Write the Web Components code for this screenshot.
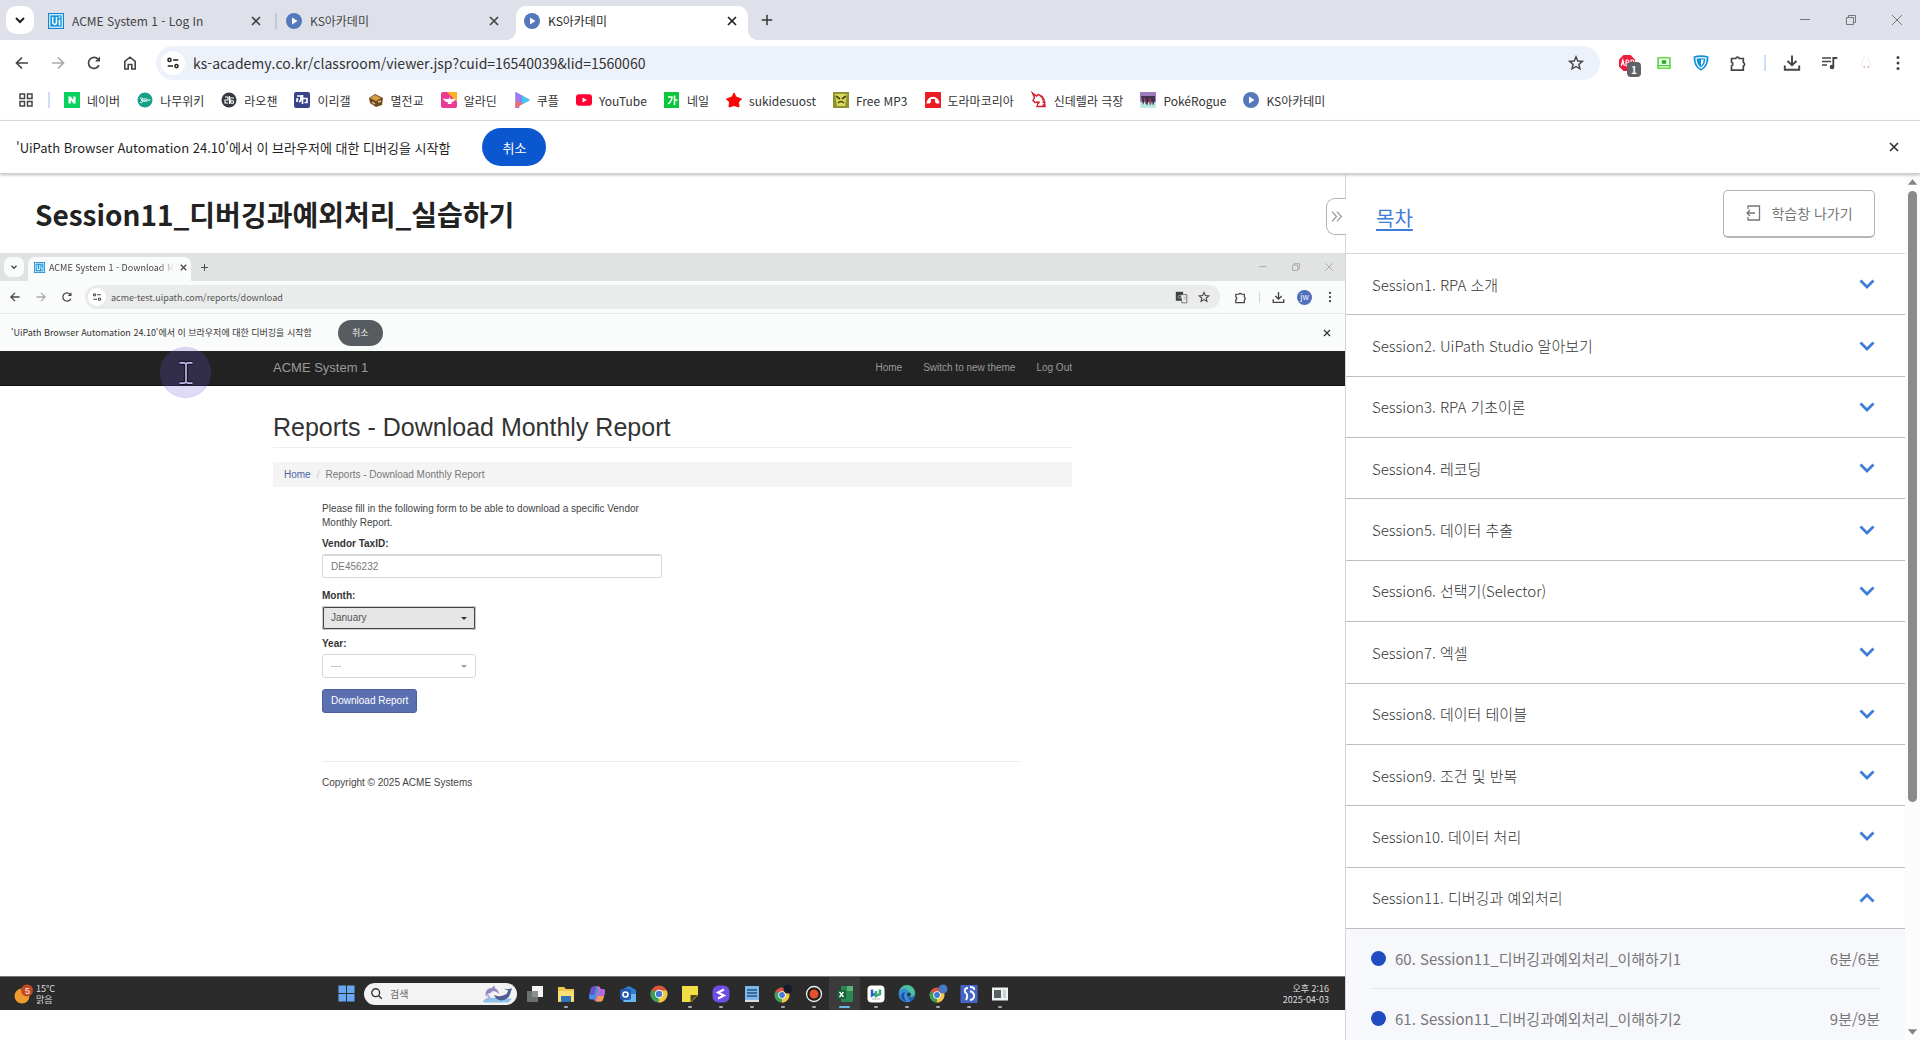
<!DOCTYPE html>
<html lang="ko">
<head>
<meta charset="utf-8">
<title>KS아카데미</title>
<style>
  html, body { margin: 0; height: 100%; }
  body { font-family: "Noto Sans CJK KR", sans-serif; font-size: 12px; color: #1f1f1f; background: #fff; overflow: hidden; }
</style>
</head>
<body>
<app-window></app-window>
<script>
const ICONS = {
  down: ['0 0 16 16', '<path d="M4 6l4 4 4-4" fill="none" stroke="currentColor" stroke-width="2"/>'],
  close: ['0 0 16 16', '<path d="M4 4l8 8M12 4l-8 8" fill="none" stroke="currentColor" stroke-width="1.7"/>'],
  thinclose: ['0 0 16 16', '<path d="M3 3l10 10M13 3L3 13" fill="none" stroke="currentColor" stroke-width="1"/>'],
  min: ['0 0 16 16', '<path d="M3 7.5h10" stroke="currentColor"/>'],
  restore: ['0 0 16 16', '<path d="M3.500 5.500h7v7h-7zM5.500 5.500v-2h7v7h-2" fill="none" stroke="currentColor"/>'],
  plus: ['0 0 16 16', '<path d="M8 2v12M2 8h12" stroke="currentColor" stroke-width="1.700"/>'],
  back: ['0 0 16 16', '<path d="M14 8H3M8 2.500L2.500 8 8 13.500" fill="none" stroke="currentColor" stroke-width="1.700"/>'],
  fwd: ['0 0 16 16', '<path d="M2 8h11M8 2.500L13.500 8 8 13.500" fill="none" stroke="currentColor" stroke-width="1.700"/>'],
  reload: ['0 0 16 16', '<path d="M13 10.200A5.500 5.500 0 1 1 12 4.200" fill="none" stroke="currentColor" stroke-width="1.700"/><path d="M14 1.500v5H9z" fill="currentColor"/>'],
  home: ['0 0 16 16', '<path d="M2.800 14V6.300L8 2.200l5.200 4.100V14H9.800V9.500H6.200V14z" fill="none" stroke="currentColor" stroke-width="1.600"/>'],
  site: ['0 0 16 16', '<g fill="none" stroke="currentColor" stroke-width="1.700"><circle cx="4" cy="4.500" r="1.800"/><path d="M8 4.500h6M2 11.500h6"/><circle cx="12" cy="11.500" r="1.800"/></g>'],
  star: ['0 0 16 16', '<path d="M8 1.800l1.800 4.200 4.600.4-3.500 3 1.100 4.500L8 11.500l-4 2.400 1.100-4.500-3.500-3 4.600-.4z" fill="none" stroke="currentColor" stroke-width="1.400"/>'],
  puzzle: ['0 0 18 18', '<path d="M2.500 4.500h4.200a1.900 1.900 0 0 1 3.600 0h4v4a1.900 1.900 0 0 1 0 3.600v4h-11.800v-4a2.200 2.200 0 0 0 0-4z" fill="none" stroke="currentColor" stroke-width="1.700"/>'],
  download: ['0 0 18 18', '<path d="M9 1.500v9.500M4.500 7L9 11.300 13.500 7M1.800 11.500v4.300h14.400v-4.300" fill="none" stroke="currentColor" stroke-width="1.900"/>'],
  media: ['0 0 18 18', '<path d="M2 4h9M2 7.500h9M2 11h5" stroke="currentColor" stroke-width="1.600"/><path d="M13.300 13V4h4" fill="none" stroke="currentColor" stroke-width="1.800"/><circle cx="12" cy="13" r="2.300" fill="currentColor"/>'],
  dots: ['0 0 16 16', '<g fill="currentColor"><circle cx="8" cy="2.500" r="1.500"/><circle cx="8" cy="8" r="1.500"/><circle cx="8" cy="13.500" r="1.500"/></g>'],
  apps: ['0 0 16 16', '<path d="M2 2h4.500v4.500H2zM9.500 2H14v4.500H9.500zM2 9.500h4.500V14H2zM9.500 9.500H14V14H9.500z" fill="none" stroke="currentColor" stroke-width="1.500"/>'],
  chevron: ['0 0 16 16', '<path d="M1.500 4.500L8 11l6.500-6.500" fill="none" stroke="currentColor" stroke-width="2.800"/>'],
  double: ['0 0 16 16', '<path d="M2.500 2L8 8l-5.500 6M8.500 2L14 8l-5.500 6" fill="none" stroke="currentColor" stroke-width="1.600"/>'],
  exit: ['0 0 16 16', '<path d="M3 4V1h11.500v14H3v-3M10 8H1.500M5 5L2 8l3 3" fill="none" stroke="currentColor" stroke-width="1.300"/>'],
  tri: ['0 0 16 16', '<path d="M8 4.500l5 6H3z" fill="currentColor"/>'],
  uipath: ['0 0 16 16', '<path d="M0 0h16v16H0z" fill="#1484d6"/><path d="M1.200 1.200h13.600v13.600H1.200z" fill="#fff"/><path d="M2.300 2.300h11.400v11.400H2.300z" fill="#1496dc"/><path d="M4.700 4v5.500a1.900 1.900 0 0 0 3.800 0V4M11.500 6.500V12.500M11.500 3.500v1.500" fill="none" stroke="#fff" stroke-width="1.500"/>'],
  play: ['0 0 16 16', '<circle cx="8" cy="8" r="8" fill="#5578bd"/><path d="M6 4.500L11.500 8 6 11.500z" fill="#fff"/>'],
  abp: ['0 0 18 18', '<path d="M5.500 1h7L17 5.500v7L12.500 17h-7L1 12.500v-7z" fill="#ed1c3c"/><path d="M3.200 12l1.600-6 1.600 6M3.800 10h2M8 6v6M8 6h1.500a1.300 1.300 0 0 1 0 2.800H8h1.500a1.500 1.500 0 0 1 0 3.200H8M13 12V6h1.300a1.500 1.500 0 0 1 0 3.200H13" fill="none" stroke="#fff" stroke-width="1.100"/>'],
  green: ['0 0 16 16', '<path d="M2.700 3.500h10.600v9H2.700zM2.700 10.300h10.600" fill="none" stroke="#3ad41f" stroke-width="1.200"/><path d="M6 5.500h4v3.200H6z" fill="#25b01a"/>'],
  shield: ['0 0 18 18', '<path d="M1.500 2.500Q9 .2 16.500 2.500q.4 10.500-7.500 14.300Q1.100 13 1.500 2.500z" fill="#1290d8"/><path d="M4 4.200Q9 3 14 4.200q0 6.800-5 10-5-3.200-5-10z" fill="none" stroke="#fff" stroke-width="1.200"/><path d="M9 5.500h2.700q0 4.200-2.700 6.700z" fill="#fff"/>'],
  ghost: ['0 0 16 16', '<path d="M7 2q-3 4-2.500 9M9 3q4 4 2 9" fill="none" stroke="#eee" stroke-width="1"/><circle cx="6.500" cy="11.500" r=".8" fill="#e7a0a0"/><circle cx="10" cy="11.500" r=".8" fill="#e7a0a0"/>'],
  naver: ['0 0 16 16', '<path d="M0 0h16v16H0z" fill="#09d25f"/><path d="M4.500 4.500h2.300L9.300 8V4.500h2.300v7H9.300L6.800 8v3.500H4.500z" fill="#fff"/>'],
  namu: ['0 0 16 16', '<circle cx="8" cy="8" r="7.500" fill="#16a085"/><path d="M3 6.500q2-1.500 2.500 0T4 8q3 0 1.500 2t-2.500 0M7 6v4l2-2 1 2M10 8h3.500M9 6v2" fill="none" stroke="#fff"/>'],
  rao: ['0 0 16 16', '<circle cx="8" cy="8" r="7.500" fill="#343842"/><path d="M4 5h3v3H4v3h3M8.500 4v8M9 6h4M11 8.500a1.500 1.500 0 1 0 .1 0M8 8h2" fill="none" stroke="#fff" stroke-width="1.100"/>'],
  dc: ['0 0 16 16', '<rect width="16" height="16" rx="2" fill="#37428b"/><path d="M3 4h4q.5 5-2 6M4.500 7h-1.500v3M8.500 3v9M8.500 6.500h4.500v4h-2.500" fill="none" stroke="#fff" stroke-width="1.700"/>'],
  box: ['0 0 16 16', '<path d="M1 6l6-4 8 4-1 7-6 2-6-4z" fill="#6b4a23"/><path d="M2 6l5-3 6 3-5 3z" fill="#d8a043"/><path d="M4 10l3 2M10 10l3-1" stroke="#f0c66a" stroke-width="1.500"/>'],
  aladin: ['0 0 16 16', '<rect width="16" height="16" rx="2" fill="#ea3a94"/><path d="M6 0h10v10z" fill="#ffaf20"/><path d="M2 6.500q4 .5 5.500.8L8.500 5l1 2.300 5-.8q-1 3.500-4.500 4l1 1.500H6.500l1-1.500Q3 9.500 2 6.500z" fill="#fff"/>'],
  coupang: ['0 0 16 16', '<path d="M1.500 0L16 8 1.500 16z" fill="#4e93f5"/><path d="M1.500 0L9 4 5 16H1.500z" fill="#a07bea"/><path d="M1.500 10L10 11 1.500 16z" fill="#ff6c5c"/><path d="M8 3.600L16 8l-8 4z" fill="#42c5f7"/>'],
  youtube: ['0 0 16 16', '<rect y="2.300" width="16" height="11.400" rx="3" fill="#f03"/><path d="M6.500 5.500L11 8l-4.500 2.500z" fill="#fff"/>'],
  neil: ['0 0 16 16', '<rect width="15" height="16" fill="#0bc73b"/><path d="M4 5h4q0 4-4 7M10.500 3.500V13M10.500 8h3" fill="none" stroke="#fff" stroke-width="1.500"/>'],
  redstar: ['0 0 16 16', '<path d="M8 1l2 4 5.500 2-3 3 .5 5-5-1.500L3 15l.5-5-3-3L6 5z" fill="#f80606" stroke="#f80606"/>'],
  mp3: ['0 0 16 16', '<rect width="16" height="16" fill="#8f9230"/><path d="M2 2h12L12 14H4z" fill="#dbd957"/><path d="M3 4l4 3M13 4L9 7M5 11q3-3 6 0" stroke="#454018" stroke-width="1.600" fill="none"/>'],
  drama: ['0 0 16 16', '<rect width="16" height="16" rx="1" fill="#ed1c24"/><path d="M1.500 11.500a6.500 6.800 0 0 1 13 0h-3l-1.500-1.500V7H6v3l-1.500 1.500z" fill="#fff"/><path d="M6.500 7h3v3l-1.500 2-1.500-2z" fill="#ed1c24"/>'],
  unicorn: ['0 0 16 16', '<path d="M1.500 1l4 3 2-1.500L9 3.500q5 2 5 11H6q0-3 2.500-4.500L4 10.500 2 8.500l1.500-3z" fill="#fff" stroke="#d3202e" stroke-width="1.500"/><path d="M10 4q3 3 2.500 10" fill="none" stroke="#d3202e" stroke-width="2" stroke-dasharray="2 1"/>'],
  poke: ['0 0 16 16', '<rect width="16" height="16" fill="#9d7bbd"/><path d="M0 10h16v6H0z" fill="#bdebe6"/><path d="M1 4h14v4l-2 6-1-5-2 5-1-6-2 6-2-6-2 5z" fill="#41304f"/><path d="M4 6l2 6M10 6l1 6" stroke="#d0424c"/>'],
  translate: ['0 0 16 16', '<rect x="1" y="1" width="9" height="11" fill="#3d4143"/><path d="M7 4.500h7.500v10H8.500z" fill="#fafafa" stroke="#555"/><path d="M7.500 5.500H5.200a1.800 1.800 0 1 0 1.900 1.800H6M10 7.500h3.500M12.500 7.500q-.5 3-2.500 4.500M10.500 9l3 3" fill="none" stroke="#aaa"/>'],
  weather: ['0 0 20 20', '<circle cx="8" cy="12" r="7.500" fill="#ee9b31"/><circle cx="13" cy="6.500" r="6" fill="#c24a23"/><text x="11" y="10" font-size="9" fill="#fff" font-family="Liberation Sans">5</text>'],
  win: ['0 0 18 18', '<path d="M.5.500h8v8h-8zM9.500.500h8v8h-8zM.5 9.500h8v8h-8zM9.500 9.500h8v8h-8z" fill="#69a9f4"/>'],
  search: ['0 0 16 16', '<circle cx="7" cy="7" r="4.800" fill="none" stroke="#333" stroke-width="1.700"/><path d="M10.500 10.500l4 4" stroke="#333" stroke-width="1.700"/>'],
  whale: ['0 0 34 18', '<path d="M1 17q3-5 9-4l22 1-4 4H2z" fill="#8fc3ea"/><path d="M3.500 10q0-7 7-7.500l2.500-2.500.8 3q4 2 4.200 6-3-3.500-7-3-2 2.500-4 2.500z" fill="#9585c4"/><path d="M13 10q7 3 13-1l2-3.500-4.500-2 4.500.5 4-1-1.500 4q-1.500 8-9.500 9-7-1-8-6z" fill="#4e5d92"/><path d="M4 11q3-3 4 4" fill="none" stroke="#b5a9df" stroke-width="2"/>'],
  task: ['0 0 18 18', '<path d="M6 1h11v11H6z" fill="#f3f3f3"/><path d="M1 6h11v11H1z" fill="#777c7e" opacity=".85"/>'],
  folder: ['0 0 18 18', '<path d="M1 2h6l2 2h8v13H1z" fill="#ecc94c"/><path d="M1 6h16v10H1z" fill="#f8df75"/><path d="M4 11h10v6H4z" fill="#2f73ba"/>'],
  copilot: ['0 0 18 18', '<path d="M5.500 1.500h5q1.500 0 2 2l-3 9.500q-.5 1.500-2 1.500H3q-2.500 0-2-3l1.800-7.500q.7-2.500 2.700-2.500z" fill="#4192e8"/><path d="M7 1.500h3.500q1.500 0 2 2.500H15q2.500 0 2 3.500L15.200 14q-.7 2.500-2.700 2.500H8q-1.500 0-2-2l1.500-.5L10.500 4z" fill="#db70aa"/><path d="M1.200 10l1.600-6q.7-2.500 2.700-2.500h3L6 10z" fill="#6754ca"/><path d="M10 11l2.500-7H15q2.500 0 2 3.500l-1 3.500z" fill="#a86be0"/><path d="M8.500 16.500L10 11h6l-.8 3q-.7 2.500-2.700 2.500z" fill="#ef9f52"/>'],
  outlook: ['0 0 18 18', '<path d="M2 5l8-4 7 4v12H4z" fill="#2a80d3"/><path d="M5 9h12v8H5z" fill="#69b8f0"/><rect x="1" y="4" width="11" height="11" rx="2" fill="#2758ae"/><circle cx="6.500" cy="9.500" r="2.500" fill="none" stroke="#fff" stroke-width="1.600"/>'],
  chrome: ['0 0 18 18', '<circle cx="9" cy="9" r="8.500" fill="#d9553f"/><path d="M9 9L1.600 4.800A8.500 8.500 0 0 0 9 17.500z" fill="#37a257"/><path d="M9 9l-.5 8.500A8.500 8.500 0 0 0 16.700 5.500H9z" fill="#efc941"/><circle cx="9" cy="9" r="4.200" fill="#fff"/><circle cx="9" cy="9" r="3.200" fill="#447bd1"/>'],
  chrome2: ['0 0 18 18', '<circle cx="8" cy="10" r="7.500" fill="#d9553f"/><path d="M8 10L1.500 6.500A7.500 7.500 0 0 0 8 17.500z" fill="#37a257"/><path d="M8 10v7.500a7.500 7.500 0 0 0 7-10H8z" fill="#efc941"/><circle cx="8" cy="10" r="3.800" fill="#fff"/><circle cx="8" cy="10" r="2.900" fill="#447bd1"/><circle cx="14" cy="4" r="4.500" fill="var(--badge,#161a2e)"/>'],
  sticky: ['0 0 18 18', '<path d="M1 1h16v16H1z" fill="#f3df45"/><path d="M9.500 10H17l-7.500 7z" fill="#4c4620"/><path d="M17 10.500V17h-7z" fill="#2b2b2b"/>'],
  sapp: ['0 0 18 18', '<rect x=".5" y=".5" width="17" height="17" rx="6" fill="#6f4ee8"/><path d="M12 4.500L6 7.500l6 3-6 3" fill="none" stroke="#fff" stroke-width="2"/>'],
  note: ['0 0 18 18', '<rect x="2" y="1" width="14" height="16" fill="#7bb9ea"/><path d="M4 5h10M4 8h10M4 11h10" stroke="#2a5078" stroke-width="1.300"/><path d="M2 15h14v2H2z" fill="#ddd"/>'],
  rec: ['0 0 18 18', '<circle cx="9" cy="9" r="7.500" fill="#1d1d1d" stroke="#eee" stroke-width="1.300"/><circle cx="9" cy="9" r="4.500" fill="#e4512d"/>'],
  excel: ['0 0 18 18', '<rect x="5" y="1" width="12" height="16" rx="1" fill="#288850"/><path d="M11 1h6v5h-6z" fill="#54b579"/><rect x="1" y="5" width="9" height="9" rx="1" fill="#17613a"/><path d="M3.500 7l4 5M7.500 7l-4 5" stroke="#fff" stroke-width="1.300"/>'],
  wapp: ['0 0 18 18', '<rect x=".5" y=".5" width="17" height="17" rx="4" fill="#fff"/><path d="M5 4.500v6l4-2" fill="none" stroke="#2962cc" stroke-width="2.500"/><path d="M9 6v5l4-2V4.500" fill="none" stroke="#35ad72" stroke-width="2.500"/><path d="M5 14h8" stroke="#bbb"/>'],
  edge: ['0 0 18 18', '<circle cx="9" cy="9" r="8.500" fill="#2463ad"/><path d="M1 8a8 8 0 0 1 16 0q0 4-5 4-3-1-2-3 0-4-4-4-4 0-5 3z" fill="#4dbf9f"/><path d="M1 8q1-4.500 5-4.500 4.500.5 4.500 4-3 4 2 8-1 1.500-4 1.500-8-1-7.500-9z" fill="#3590d8"/><path d="M7 7q-3 5 2 9.500-6-1-6-6Q4 7 7 7z" fill="#254fa5"/><circle cx="11" cy="9.500" r="2" fill="#1c355d"/>'],
  sblue: ['0 0 18 18', '<rect x=".5" width="17" height="18" fill="#4566c8"/><path d="M8 3q-4 0-3 4 4 3 1 8M10 2q5 0 4 3M10 6q5 2 4 6-1 3-4 3" fill="none" stroke="#fff" stroke-width="1.900"/>'],
  panel: ['0 0 18 18', '<rect x="1" y="2.500" width="16" height="13" fill="#edf1f1"/><path d="M3 5h7v8H3z" fill="#576166"/><path d="M12 5h3v8h-3z" fill="#cbd2d2"/>'],
  cursor: ['0 0 20 26', '<path d="M3 2h5l2 1 2-1h5M10 3v20M3 24h5l2-1 2 1h5" fill="none" stroke="#14142a" stroke-width="4.500"/><path d="M3 2h5l2 1 2-1h5M10 3v20M3 24h5l2-1 2 1h5" fill="none" stroke="#c3b6ea" stroke-width="1.800"/>']
};

/* Shared base: each element renders its template into an open shadow root. */
class Base extends HTMLElement {
  connectedCallback() {
    if (this.shadowRoot) return;
    const t = document.createElement('template');
    t.innerHTML = `<style>
      :host{box-sizing:border-box;display:block}
      *,*::before,*::after{box-sizing:border-box}
      button{font:inherit;color:inherit;background:none;border:0;padding:0;margin:0;display:flex;align-items:center;justify-content:center}
      input,select{font:inherit;color:inherit;border:0;margin:0;padding:0;background:none;min-width:0;outline:0}
      a{color:inherit;text-decoration:none}
      ${this.css()}</style>${this.html()}`;
    this.attachShadow({ mode: 'open' }).append(t.content.cloneNode(true));
  }
  css() { return ''; }
  html() { return '<slot></slot>'; }
  at(n) { return this.getAttribute(n) || ''; }
}
const def = (name, css, html) => customElements.define(name, class extends Base {
  css() { return typeof css === 'function' ? css(this) : css; }
  html() { return typeof html === 'function' ? html(this) : html; }
});
const icon = (name, size = 16, cls = '') => `<svg-icon name="${name}" size="${size}" class="${cls}"></svg-icon>`;

def('svg-icon', e => `:host{flex:none;width:${e.at('size')}px;height:${e.at('size')}px} svg{display:block;width:100%;height:100%;overflow:visible}`,
  e => `<svg viewBox="${ICONS[e.at('name')][0]}" aria-hidden="true">${ICONS[e.at('name')][1]}</svg>`);

def('browser-tab', `
  :host{width:238px;height:34px;padding:0 14px 5px 8px;display:flex;align-items:center;gap:8px;color:#444;position:relative}
  :host([sep])::after{content:"";position:absolute;right:1px;top:7px;width:2px;height:16px;background:#c3c8d1}
  :host([active]){width:232px;background:#fff;color:#1f1f1f;border-radius:10px 10px 0 0;padding-right:8px}
  :host([active])::before,:host([active])::after{content:"";position:absolute;bottom:0;width:10px;height:10px}
  :host([active])::before{left:-10px;background:radial-gradient(circle at 0 0,transparent 10px,#fff 10px)}
  :host([active])::after{right:-10px;background:radial-gradient(circle at 100% 0,transparent 10px,#fff 10px)}
  span{flex:1;white-space:nowrap;overflow:hidden}`,
  e => `${icon(e.at('icon'))}<span><slot></slot></span><button aria-label="탭 닫기">${icon('close')}</button>`);

def('tab-strip', `
  :host{display:flex;height:40px;padding:6px 0 0 6px;background:#dee1e9}
  .search{width:28px;height:28px;border-radius:10px;background:#fff;margin-right:6px}
  .plus{width:38px;height:28px;margin-top:0;color:#333}
  .win{margin-left:auto;display:flex;gap:30px;padding:0 15px;height:28px;align-items:center;color:#777}`,
  `<button class="search" aria-label="탭 검색">${icon('down')}</button><slot></slot>
   <button class="plus" aria-label="새 탭">${icon('plus', 14)}</button>
   <div class="win"><button aria-label="최소화">${icon('min')}</button><button aria-label="이전 크기로">${icon('restore')}</button><button aria-label="닫기">${icon('thinclose')}</button></div>`);

def('tool-bar', `
  :host{display:flex;align-items:center;height:46px;padding:0 19px 0 14px;gap:20px;color:#444;background:#fff}
  .omni{flex:1;display:flex;align-items:center;height:34px;border-radius:17px;background:#ecf1fa;padding:0 16px 0 5px;gap:8px;margin:0 -4px 0 -2px}
  .site{width:24px;height:24px;border-radius:50%;background:#fff;color:#222}
  input{flex:1;font-size:14px;color:#333}
  .off{color:#aaa} .sep{width:2px;height:16px;background:#cfdef8;margin:0 -2px}
  .abp{position:relative}
  .badge{position:absolute;left:9px;top:8px;width:14px;height:15px;border-radius:4px;background:#5f6368;color:#fff;font-size:10px;line-height:15px;text-align:center;font-weight:700}
  .r{display:flex;align-items:center;gap:19px;margin-left:2px} .dots{margin:0 -5px 0 -4px}`,
  `<button aria-label="뒤로">${icon('back')}</button><button class="off" aria-label="앞으로">${icon('fwd')}</button>
   <button aria-label="새로고침">${icon('reload')}</button><button aria-label="홈">${icon('home')}</button>
   <div class="omni"><button class="site" aria-label="사이트 정보">${icon('site', 14)}</button>
   <input aria-label="주소창" value="ks-academy.co.kr/classroom/viewer.jsp?cuid=16540039&amp;lid=1560060"><button aria-label="북마크">${icon('star')}</button></div>
   <div class="r"><button class="abp" aria-label="Adblock">${icon('abp', 18)}<span class="badge">1</span></button>
   <button aria-label="확장 1">${icon('green', 18)}</button><button aria-label="확장 2">${icon('shield', 18)}</button><button aria-label="확장 프로그램">${icon('puzzle', 18)}</button>
   <span class="sep"></span><button aria-label="다운로드">${icon('download', 18)}</button><button aria-label="미디어">${icon('media', 18)}</button><button aria-label="프로필">${icon('ghost', 18)}</button>
   <button class="dots" aria-label="메뉴">${icon('dots')}</button></div>`);

def('bookmark-item', `:host{flex:none} a{display:flex;align-items:center;gap:7px;white-space:nowrap;color:#333}`,
  e => `<a href="#">${icon(e.at('icon'))}<span><slot></slot></span></a>`);

def('bookmark-bar', `
  :host{display:flex;align-items:center;height:35px;padding:0 18px 6px;gap:17px;border-bottom:1px solid #dcdcdc;background:#fff}
  button{color:#444;margin-right:-3px} i{width:2px;height:16px;background:#cfdef8;margin-right:-3px}`,
  `<button aria-label="앱">${icon('apps')}</button><i></i><slot></slot>`);

def('info-bar', `
  :host{display:flex;align-items:center;height:53px;padding:0 18px 0 16px;gap:32px;font-size:13px;background:#fff;position:relative;z-index:1;border-bottom:1px solid #cfcfcf;box-shadow:0 1px 3px #bbb}
  .cancel{width:64px;height:38px;border-radius:19px;background:#0b57d0;color:#fff}
  .x{margin-left:auto;color:#333}`,
  `<span><slot></slot></span><button class="cancel">취소</button><button class="x" aria-label="닫기">${icon('close')}</button>`);

/* Lesson video: a recorded browser at a smaller scale. */
def('rec-tabs', `
  :host{display:flex;height:28px;padding:4px 10px 0 4px;background:#e1e3e3;font-size:9px;color:#444}
  .search{width:20px;height:20px;border-radius:7px;background:#fafbfb}
  .tab{width:163px;height:24px;margin-left:4px;padding:0 6px 3px;display:flex;align-items:center;gap:4px;background:#fafbfb;border-radius:7px 7px 0 0}
  .tab span{flex:1;white-space:nowrap;mask-image:linear-gradient(90deg,#000 88%,transparent)}
  .plus{width:26px;height:20px}
  .win{margin-left:auto;display:flex;gap:21px;height:20px;align-items:center;color:#999}`,
  `<button class="search" aria-label="탭 검색">${icon('down', 10)}</button>
   <div class="tab">${icon('uipath', 11)}<span>ACME System 1 - Download M</span><button aria-label="탭 닫기">${icon('close', 11)}</button></div>
   <button class="plus" aria-label="새 탭">${icon('plus', 9)}</button>
   <div class="win">${icon('min', 12)}${icon('restore', 12)}${icon('thinclose', 12)}</div>`);

def('rec-toolbar', `
  :host{display:flex;align-items:center;height:33px;padding:0 9px;gap:14px;background:#fafbfb;border-bottom:1px solid #e6e7e7;color:#444}
  .off{color:#aaa}
  .omni{flex:1;display:flex;align-items:center;height:24px;border-radius:12px;background:#eaebeb;padding:0 10px 0 3px;gap:5px;margin-left:-2px}
  .site{width:18px;height:18px;border-radius:50%;background:#fff}
  input{flex:1;font-size:9px;color:#555} .omni .star{margin-left:5px}
  i{width:1px;height:11px;background:#d5d6d6} .av{width:15px;height:15px;border-radius:50%;background:#4f6fba;color:#fff;font-size:8px;line-height:14px;text-align:center}
  .r{display:flex;align-items:center;gap:12px}`,
  `<button aria-label="뒤로">${icon('back', 12)}</button><button class="off" aria-label="앞으로">${icon('fwd', 12)}</button><button aria-label="새로고침">${icon('reload', 12)}</button>
   <div class="omni"><button class="site" aria-label="사이트 정보">${icon('site', 10)}</button><input aria-label="주소" value="acme-test.uipath.com/reports/download">
   ${icon('translate', 13)}${icon('star', 12, 'star')}</div>
   <div class="r">${icon('puzzle', 13)}<i></i>${icon('download', 13)}<span class="av">jw</span>${icon('dots', 12)}</div>`);

def('rec-info', `
  :host{display:flex;align-items:center;height:37px;padding:0 12px 0 11px;gap:26px;font-size:9px;background:#fafbfb;color:#333}
  .cancel{width:45px;height:26px;border-radius:13px;background:#565c60;color:#eee}
  .x{margin-left:auto}`,
  `<span><slot></slot></span><button class="cancel">취소</button><button class="x" aria-label="닫기">${icon('close', 12)}</button>`);

def('acme-page', `
  :host{font-family:"Liberation Sans",Arial,sans-serif;font-size:10px;line-height:14px;color:#444;background:#fff}
  nav{height:35px;background:#222;color:#9a9a9a;border-bottom:1px solid #111}
  .wrap{width:799px;margin:0 auto;display:flex;flex-direction:column}
  nav .wrap{height:34px;flex-direction:row;align-items:center;gap:21px}
  nav b{font-weight:400;font-size:13px;margin-right:auto}
  h1{margin:0;padding:25px 0 4px;font-weight:400;font-size:25px;line-height:32px;color:#333;border-bottom:1px solid #eee}
  .crumb{margin-top:14px;height:25px;background:#f4f4f4;display:flex;align-items:center;gap:6px;padding:0 11px;color:#777}
  .crumb a{color:#4d62a3} .crumb i{font-style:normal;color:#ccc}
  form{margin:15px 49px 0;display:flex;flex-direction:column;align-items:flex-start}
  p{margin:0 0 7px;width:340px;padding-right:20px}
  label{font-weight:700;color:#333;margin-bottom:3px}
  input{width:340px;height:24px;border:1px solid #d8d8d8;border-top-width:2px;border-radius:3px;padding:0 8px;color:#777;margin-bottom:11px}
  .sel{position:relative;margin-bottom:7px}
  select{appearance:none;display:block;width:154px;height:24px;border:1px solid #d8d8d8;border-radius:3px;padding:0 8px;color:#aaa;background:#fff}
  .on select{background:#e6e6e6;border:2px solid #444;color:#555;outline:1px solid #ccc;outline-offset:-1px;padding:0 7px}
  .sel::after{content:"";position:absolute;right:9px;top:11px;border:3px solid transparent;border-top-color:#999;border-bottom:0}
  .on::after{border-top-color:#333}
  .dl{height:24px;padding:0 8px;background:#5a70b0;color:#fff;border-radius:3px;border:1px solid #4a609f;margin-top:4px}
  footer{margin:48px 52px 0 49px;border-top:1px solid #eee;padding-top:14px}`,
  `<nav><div class="wrap"><b>ACME System 1</b><a href="#">Home</a><a href="#">Switch to new theme</a><a href="#">Log Out</a></div></nav>
   <div class="wrap"><h1>Reports - Download Monthly Report</h1>
   <div class="crumb"><a href="#">Home</a><i>/</i><span>Reports - Download Monthly Report</span></div>
   <form onsubmit="return false"><p>Please fill in the following form to be able to download a specific Vendor Monthly Report.</p>
   <label for="tax">Vendor TaxID:</label><input id="tax" value="DE456232">
   <label for="mon">Month:</label><div class="sel on"><select id="mon"><option>January</option></select></div>
   <label for="yr">Year:</label><div class="sel"><select id="yr"><option>---</option></select></div>
   <button class="dl">Download Report</button></form>
   <footer>Copyright © 2025 ACME Systems</footer></div>`);

def('task-app', `
  :host{width:31px;height:100%;display:flex;flex-direction:column;align-items:center;justify-content:center;gap:3px;padding-top:5px}
  :host([active]){background:#3b3b3b}
  i{width:4px;height:2px;border-radius:1px;background:transparent}
  :host([run]) i{background:#aaa} :host([active]) i{width:11px;background:#6bb4e8}`,
  e => `${icon(e.at('icon'), 18)}<i></i>`);

def('task-bar', `
  :host{display:grid;grid-template-columns:1fr auto 1fr;align-items:center;height:34px;background:#2b2b2b;border-top:1px solid #777;color:#ddd;font-size:9px;line-height:11px}
  .w{display:flex;align-items:center;gap:2px;padding-left:14px}
  .mid{display:flex;align-items:center;height:33px;padding-left:8px}
  .search{display:flex;align-items:center;width:153px;height:22px;border-radius:11px;background:#f3f3f3;margin:0 2px 0 9px;padding:0 3px 0 6px;gap:7px}
  input{flex:1;width:40px;color:#555;font-size:10px} input::placeholder{color:#666}
  .clock{text-align:right;padding-right:16px}`,
  `<div class="w">${icon('weather', 20)}<div>15°C<br>맑음</div></div>
   <div class="mid">${icon('win', 17)}<label class="search">${icon('search', 13)}<input placeholder="검색" aria-label="검색">${icon('whale', 32)}</label>
   ${[['task'], ['folder', 'run'], ['copilot'], ['outlook'], ['chrome'], ['sticky', 'run'], ['sapp', 'run'], ['note', 'run'], ['chrome2', 'run'], ['rec', 'run'], ['excel', 'active'], ['wapp', 'run'], ['edge', 'run'], ['chrome2', 'run style="--badge:#4a78c8"'], ['sblue', 'run'], ['panel', 'run']].map(a => `<task-app icon="${a[0]}" ${a[1] || ''}></task-app>`).join('')}</div>
   <div class="clock">오후 2:16<br>2025-04-03</div>`);

def('lesson-video', `
  :host{position:relative;height:757px;display:flex;flex-direction:column}
  acme-page{flex:1}
  .hl{position:absolute;left:160px;top:94px;width:51px;height:51px;border-radius:50%;background:rgba(110,85,215,.22);box-shadow:inset 0 0 2px rgba(110,85,215,.2);display:flex;align-items:center;justify-content:center}`,
  `<rec-tabs></rec-tabs><rec-toolbar></rec-toolbar><rec-info>'UiPath Browser Automation 24.10'에서 이 브라우저에 대한 디버깅을 시작함</rec-info>
   <acme-page></acme-page><task-bar></task-bar><div class="hl">${icon('cursor', 24)}</div>`);

def('lesson-stage', `
  :host{flex:1;min-width:0;position:relative}
  h2{margin:0;height:79px;padding:0 35px;display:flex;align-items:center;font-size:28px;line-height:40px;font-weight:700;color:#222}
  .fold{position:absolute;right:-1px;top:24px;width:20px;height:37px;border:1px solid #b5b5b5;border-right:0;border-radius:9px 0 0 9px;background:#fff;color:#999;z-index:1}`,
  `<h2><slot></slot></h2><lesson-video></lesson-video><button class="fold" aria-label="목차 접기">${icon('double', 13)}</button>`);

def('session-item', `
  button{width:100%;height:100%;padding:0 30px 0 26px;justify-content:space-between;font-size:15px;font-weight:300;color:#333;border-bottom:1px solid #bdbdbd}
  svg-icon{color:#3f7bd9} :host([open]) svg-icon{transform:rotate(180deg)}`,
  e => `<button aria-expanded="${e.hasAttribute('open')}"><span><slot></slot></span>${icon('chevron')}</button>`);

def('lesson-item', `
  :host{margin:0 25px;height:60px;border-bottom:1px solid #e3e5ea}
  a{display:flex;align-items:center;height:100%;gap:9px;font-size:15px;color:#777}
  i{width:15px;height:15px;border-radius:50%;background:#1f4cc0} time{margin-left:auto}`,
  e => `<a href="#"><i></i><span><slot></slot></span><time>${e.at('time')}</time></a>`);

def('course-sidebar', `
  :host{width:575px;flex:none;display:flex;border-left:1px solid #d5d5d5}
  .list{flex:1;background:#f7f8fc;overflow:hidden}
  header{height:80px;padding:0 30px;display:flex;align-items:center;justify-content:space-between;background:#fff;border-bottom:1px solid #d8d8d8}
  header a{font-size:20px;line-height:24px;color:#3f7bd9;text-decoration:underline;text-underline-offset:3px;margin-top:8px}
  header button{width:152px;height:48px;border:1px solid #b5b5b5;border-bottom-width:2px;border-radius:5px;color:#777;font-size:14px;gap:10px}
  .sessions{display:grid;grid-auto-rows:1fr;height:675px;background:#fff}
  .bar{width:15px;background:#fcfcfc;display:flex;flex-direction:column;align-items:center;color:#858585;padding:1px 0}
  .thumb{width:9px;height:611px;margin-top:1px;border-radius:5px;background:#8b8b8b}
  .dn{margin-top:auto;transform:rotate(180deg)}`,
  `<div class="list"><header><a href="#">목차</a><button>${icon('exit', 16)}학습창 나가기</button></header>
   <div class="sessions"><slot name="session"></slot></div><slot></slot></div>
   <div class="bar">${icon('tri', 15)}<div class="thumb"></div>${icon('tri', 15, 'dn')}</div>`);

def('app-window', `
  :host{height:100vh;display:flex;flex-direction:column;overflow:hidden}
  main{flex:1;min-height:0;display:flex} tab-strip,tool-bar,bookmark-bar,info-bar{flex:none}`,
  `<tab-strip><browser-tab icon="uipath" sep>ACME System 1 - Log In</browser-tab><browser-tab icon="play">KS아카데미</browser-tab><browser-tab icon="play" active>KS아카데미</browser-tab></tab-strip>
   <tool-bar></tool-bar>
   <bookmark-bar>${[['naver', '네이버'], ['namu', '나무위키'], ['rao', '라오챈'], ['dc', '이리갤'], ['box', '멸전교'], ['aladin', '알라딘'], ['coupang', '쿠플'], ['youtube', 'YouTube'], ['neil', '네일'], ['redstar', 'sukidesuost'], ['mp3', 'Free MP3'], ['drama', '도라마코리아'], ['unicorn', '신데렐라 극장'], ['poke', 'PokéRogue'], ['play', 'KS아카데미']].map(b => `<bookmark-item icon="${b[0]}">${b[1]}</bookmark-item>`).join('')}</bookmark-bar>
   <info-bar>'UiPath Browser Automation 24.10'에서 이 브라우저에 대한 디버깅을 시작함</info-bar>
   <main><lesson-stage>Session11_디버깅과예외처리_실습하기</lesson-stage>
   <course-sidebar>${['1. RPA 소개', '2. UiPath Studio 알아보기', '3. RPA 기초이론', '4. 레코딩', '5. 데이터 추출', '6. 선택기(Selector)', '7. 엑셀', '8. 데이터 테이블', '9. 조건 및 반복', '10. 데이터 처리', '11. 디버깅과 예외처리'].map((s, i) => `<session-item slot="session" ${i === 10 ? 'open' : ''}>Session${s}</session-item>`).join('')}
   <lesson-item time="6분/6분">60. Session11_디버깅과예외처리_이해하기1</lesson-item><lesson-item time="9분/9분">61. Session11_디버깅과예외처리_이해하기2</lesson-item></course-sidebar></main>`);
</script>
</body>
</html>
